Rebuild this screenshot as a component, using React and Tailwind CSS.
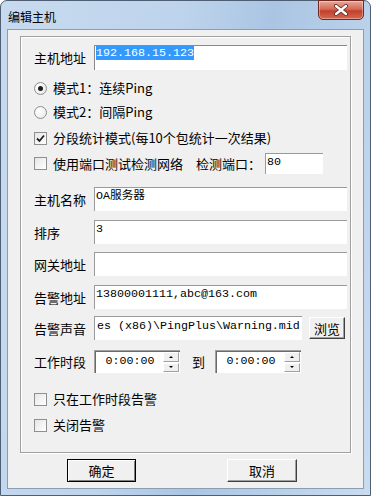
import React from 'react';

const cjk = "font-['Noto_Sans_CJK_SC',sans-serif]";
const mono = "font-['Liberation_Mono','Noto_Sans_CJK_SC',monospace]";

const TextBox = ({ width, height = 'h-[24px]', children }) => (
    <div className={`${width} ${height} bg-white border-t border-l border-[#9a9a9a] pl-[1px] pt-[2px] overflow-hidden whitespace-nowrap text-[11.67px] leading-[13px] text-black ${mono}`}>
        {children}
    </div>
);

const Radio = ({ checked }) => (
    <span className="w-[13px] h-[13px] rounded-full border border-[#8e8f8f] bg-[radial-gradient(circle_at_35%_35%,#ffffff,#e6e6e6)] flex items-center justify-center shrink-0">
        {checked && <span className="w-[5px] h-[5px] rounded-full bg-[#1e1e1e]" />}
    </span>
);

const Check = ({ checked }) => (
    <span className="w-[13px] h-[13px] border border-[#8e8f8f] bg-[linear-gradient(135deg,#e6e6e6,#ffffff)] flex items-center justify-center shrink-0">
        {checked && (
            <svg width="9" height="9" viewBox="0 0 9 9">
                <path d="M1 4.5 L3.5 7 L8 1.5" fill="none" stroke="#1e1e1e" strokeWidth="1.8" />
            </svg>
        )}
    </span>
);

const Option = ({ kind, checked, children, className = '' }) => (
    <div className={`flex items-center h-[24px] pl-[13px] ${className}`}>
        {kind === 'radio' ? <Radio checked={checked} /> : <Check checked={checked} />}
        <span className="ml-[6px] text-[13px]">{children}</span>
    </div>
);

const Field = ({ label, className = '', children }) => (
    <div className={`flex items-center pl-[13px] ${className}`}>
        <span className="w-[60px] text-[13px] pt-[1px]">{label}</span>
        {children}
    </div>
);

const TimeBox = ({ className = '' }) => (
    <div className={`w-[86px] h-[23px] flex bg-white border-t border-l border-[#a0a0a0] shadow-[inset_1px_1px_0_#6a6a6a] ${className}`}>
        <div className={`flex-1 flex items-center justify-center pl-[2px] text-[11.67px] ${mono}`}>0:00:00</div>
        <div className="w-[17px] flex flex-col pt-[1px] pb-[1px] pr-[1px] gap-[1px]">
            {['M2 4 L4 2 L6 4 Z', 'M2 2 L4 4 L6 2 Z'].map((d) => (
                <div key={d} className="flex-1 bg-[#f0f0f0] border-t border-l border-white border-r border-b border-r-[#a0a0a0] border-b-[#a0a0a0] flex items-center justify-center">
                    <svg width="8" height="6" viewBox="0 0 8 6"><path d={d} fill="#000" /></svg>
                </div>
            ))}
        </div>
    </div>
);

export default function App() {
    return (
        <div className={`w-[371px] h-[496px] flex flex-col border border-[#4f5f73] rounded-t-[7px] px-[6px] pb-[6px] bg-[linear-gradient(100deg,#c7daef_0%,#bed4ec_40%,#aac5e3_60%,#c9dcf0_100%)] ${cjk}`}>
            <div className="h-[28px] flex items-start justify-between shrink-0">
                <span className="mt-[7px] ml-[1px] text-[12px] text-black">编辑主机</span>
                <div className="-mt-[1px] w-[46px] h-[20px] rounded-b-[5px] border border-[#6e2a22] bg-[linear-gradient(180deg,#eaa89a_0%,#d46a55_45%,#c2402a_55%,#d6684f_100%)] flex items-center justify-center shadow-[inset_0_0_0_1px_rgba(255,255,255,0.35)]">
                    <svg width="16" height="12" viewBox="0 0 16 12">
                        <path d="M3 2 L13 10 M13 2 L3 10" stroke="#5a2a24" strokeWidth="4" strokeLinecap="round" />
                        <path d="M3 2 L13 10 M13 2 L3 10" stroke="#ffffff" strokeWidth="2.4" strokeLinecap="round" />
                    </svg>
                </div>
            </div>
            <div className="flex-1 border border-[#8a9db3] bg-[#f0f0f0] flex flex-col text-black">
                <div className="ml-[12px] mt-[6px] w-[331px] h-[417px] border border-[#a0a0a0] shadow-[inset_1px_1px_0_#ffffff,1px_1px_0_#ffffff] flex flex-col">
                    <Field label="主机地址" className="mt-[8px]">
                        <div className={`w-[253px] h-[25px] bg-white border-t border-l border-[#8a8a8a] pl-[1px] pt-[1px] text-[11.67px] leading-[13px] ${mono}`}>
                            <span className="bg-[#3399ff] text-white">192.168.15.123</span>
                        </div>
                    </Field>
                    <Option kind="radio" checked className="mt-[6px]">模式1：连续Ping</Option>
                    <Option kind="radio" className="h-[23px]">模式2：间隔Ping</Option>
                    <Option kind="check" checked className="mt-[2px]">分段统计模式(每10个包统计一次结果)</Option>
                    <div className="flex items-center h-[23px] pl-[13px] mt-[2px]">
                        <Check />
                        <span className="ml-[6px] w-[143px] text-[13px]">使用端口测试检测网络</span>
                        <span className="w-[69px] text-[13px]">检测端口：</span>
                        <TextBox width="w-[58px]" height="h-[21px]">80</TextBox>
                    </div>
                    <Field label="主机名称" className="mt-[12px]">
                        <TextBox width="w-[253px]">OA服务器</TextBox>
                    </Field>
                    <Field label="排序" className="mt-[9px]">
                        <TextBox width="w-[253px]">3</TextBox>
                    </Field>
                    <Field label="网关地址" className="mt-[8px]">
                        <TextBox width="w-[253px]" />
                    </Field>
                    <Field label="告警地址" className="mt-[9px]">
                        <TextBox width="w-[253px]">13800001111,abc@163.com</TextBox>
                    </Field>
                    <Field label="告警声音" className="mt-[7px]">
                        <TextBox width="w-[208px]">
                            <span className="inline-block pl-[1px] pt-[1px]">es (x86)\PingPlus\Warning.mid</span>
                        </TextBox>
                        <button className="ml-[7px] w-[36px] h-[22px] bg-[#f0f0f0] border border-t-white border-l-white border-r-[#404040] border-b-[#404040] shadow-[inset_-1px_-1px_0_#a0a0a0] text-[13px] leading-none">浏览</button>
                    </Field>
                    <Field label="工作时段" className="mt-[10px]">
                        <TimeBox />
                        <span className="ml-[12px] text-[13px]">到</span>
                        <TimeBox className="ml-[10px]" />
                    </Field>
                    <Option kind="check" className="mt-[14px]">只在工作时段告警</Option>
                    <Option kind="check" className="mt-[2px]">关闭告警</Option>
                </div>
                <div className="flex mt-[6px] ml-[59px]">
                    <button className="w-[69px] h-[23px] bg-[#f0f0f0] border border-black shadow-[inset_1px_1px_0_#ffffff,inset_-1px_-1px_0_#808080] text-[13px] leading-none">确定</button>
                    <button className="ml-[91px] w-[70px] h-[23px] bg-[#f0f0f0] border border-t-white border-l-white border-r-[#404040] border-b-[#404040] shadow-[inset_-1px_-1px_0_#a0a0a0] text-[13px] leading-none">取消</button>
                </div>
            </div>
        </div>
    );
}
